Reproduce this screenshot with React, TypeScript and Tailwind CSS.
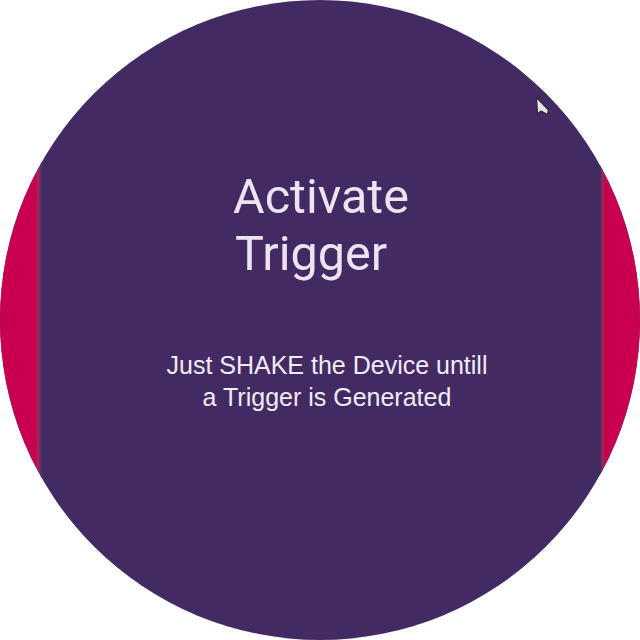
import React from "react";

export default function App() {
  return (
    <div className="w-[640px] h-[640px] bg-white">
      <div className="relative w-[640px] h-[640px] rounded-full overflow-hidden flex bg-[#442a63]">
        <div className="w-[42px] h-full bg-linear-to-r from-[#c9004f] from-[86%] to-[#442a63]" />
        <div className="flex-1 flex flex-col items-center pt-[168px]">
          <div
            className="text-left text-[48.5px] leading-[57px] text-[#ece4f3]"
            style={{ fontFamily: "Roboto, 'Noto Sans', sans-serif" }}
          >
            <div>Activate</div>
            <div className="pl-[2px]">Trigger</div>
          </div>
          <div
            className="mt-[67px] ml-[12px] text-center text-[25px] leading-[32px] text-[#f1ecf6]"
            style={{ fontFamily: "'Liberation Sans', Arial, sans-serif" }}
          >
            <div>Just SHAKE the Device untill</div>
            <div>a Trigger is Generated</div>
          </div>
        </div>
        <div className="w-[40px] h-full bg-linear-to-l from-[#c9004f] from-[88%] to-[#442a63]" />
        <svg
          className="absolute left-[535px] top-[96px]"
          width="16"
          height="24"
          viewBox="0 0 16 24"
        >
          <polygon
            points="1.5,1.5 2.5,18 6,15 12.5,18.5 13.5,14"
            fill="#e4e4e4"
            stroke="#2a2a2a"
            strokeWidth="1.2"
            strokeLinejoin="round"
          />
        </svg>
      </div>
    </div>
  );
}
